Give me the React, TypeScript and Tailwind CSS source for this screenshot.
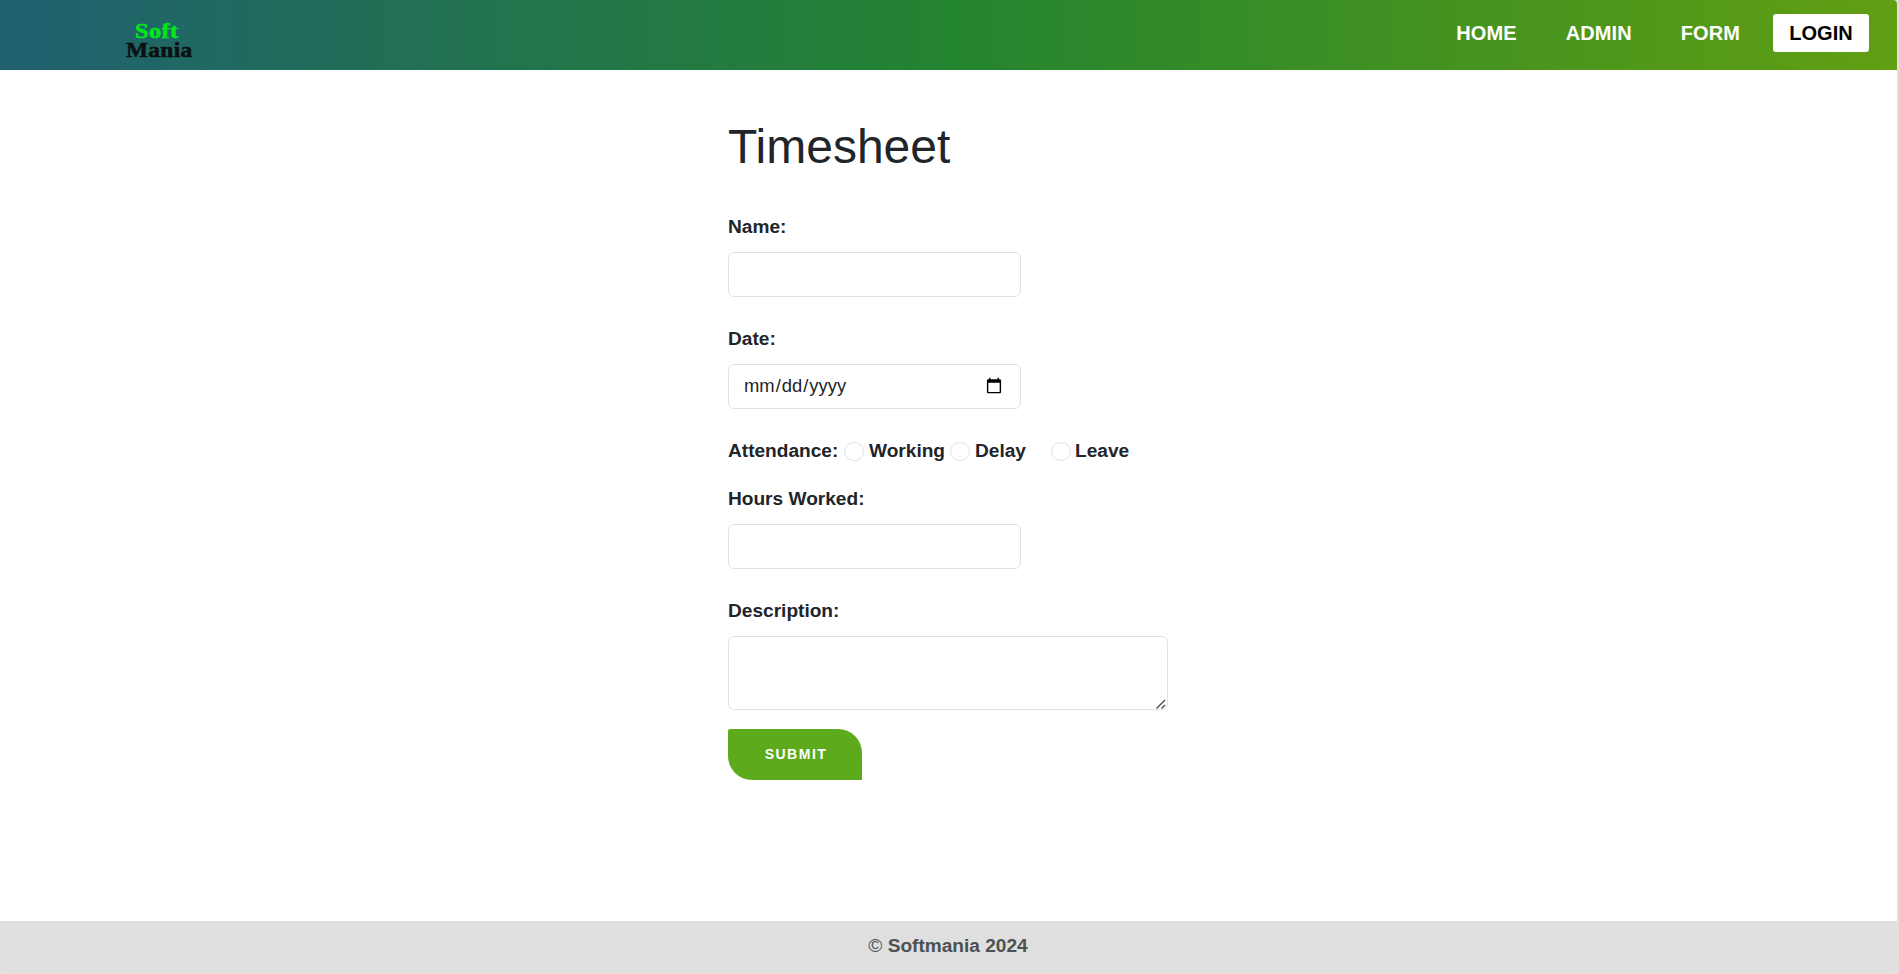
import type { ReactNode } from 'react';

const fieldClass =
  'block rounded-[6px] border border-[#dee2e6] bg-white text-[18.4px] text-[#212529] outline-none';

function Logo() {
  return (
    <svg width="80" height="50" viewBox="0 0 80 50" className="shrink-0" fontFamily="Liberation Serif, serif" fontWeight="700" fontSize="20" letterSpacing="0.3">
      <text x="15" y="22.5" textLength="43.5" lengthAdjust="spacingAndGlyphs" fill="#00e61b" stroke="#00e61b" strokeWidth="0.5">Soft</text>
      <text x="6" y="41.5" textLength="66.5" lengthAdjust="spacingAndGlyphs" fill="#0b1010" stroke="#0b1010" strokeWidth="0.5">Mania</text>
    </svg>
  );
}

function Label({ children }: { children: ReactNode }) {
  return <label className="block h-[29px] text-[19.1px] leading-[28px] font-bold">{children}</label>;
}

function RadioDot() {
  return (
    <input
      type="radio"
      name="attendance"
      className="block h-[19px] w-5 shrink-0 appearance-none rounded-full border border-[#dee2e6] bg-white"
    />
  );
}

export default function App() {
  return (
    <div className="h-[974px] overflow-hidden bg-[#e9dcdc] pr-[2px] pb-[2px] font-['Liberation_Sans',Arial,sans-serif] text-[#212529]">
      <div className="flex h-full flex-col overflow-hidden rounded-tr-[4px] rounded-b-[6px] bg-white">
        <header className="flex h-[70px] shrink-0 items-start justify-between bg-[linear-gradient(to_right,#206070_0%,#238430_50%,#619f12_100%)] pr-[28px] pl-[120px]">
          <div className="pt-[15px]">
            <Logo />
          </div>
          <nav className="flex items-center pt-[14px] text-[20px] leading-[38px] font-bold text-white">
            <a className="mr-[49px] tracking-[0.1px]">HOME</a>
            <a className="mr-[49px] tracking-[0.1px]">ADMIN</a>
            <a className="mr-[33px] tracking-[0.1px]">FORM</a>
            <a className="h-[38px] w-24 rounded-[3px] bg-white text-center text-black">LOGIN</a>
          </nav>
        </header>

        <main className="flex-1 pl-[728px]">
          <h1 className="mt-[48px] h-[58px] text-[48px] leading-[58px]">Timesheet</h1>
          <div className="mt-[37px]">
            <Label>Name:</Label>
            <input type="text" className={`${fieldClass} mt-[10px] h-[45px] w-[293px] px-[15px]`} />
          </div>
          <div className="mt-[28px]">
            <Label>Date:</Label>
            <input type="date" className={`${fieldClass} mt-[10px] h-[45px] w-[293px] pr-[15px] pb-px pl-[14px]`} />
          </div>
          <div className="mt-[28px] flex h-[29px] items-center text-[19.1px] leading-[28px] font-bold">
            <span className="mb-px w-[116px]">Attendance:</span>
            <RadioDot />
            <span className="mb-px ml-[5px] w-[81px]">Working</span>
            <RadioDot />
            <span className="mb-px ml-[5px] w-[76px]">Delay</span>
            <RadioDot />
            <span className="mb-px ml-[4px]">Leave</span>
          </div>
          <div className="mt-[19px]">
            <Label>Hours Worked:</Label>
            <input type="text" className={`${fieldClass} mt-[10px] h-[45px] w-[293px] px-[15px]`} />
          </div>
          <div className="mt-[28px]">
            <Label>Description:</Label>
            <div className="relative mt-[10px] w-[440px]">
              <textarea className={`${fieldClass} h-[74px] w-[440px] resize-none px-[15px]`} />
              <svg className="absolute right-[2px] bottom-[1px]" width="10" height="10" viewBox="0 0 10 10" stroke="#4a4a4a" strokeWidth="1.4">
                <path d="M0.5 9.5 9 1M5.5 9.5 9 6" fill="none" />
              </svg>
            </div>
          </div>
          <button className="mt-[19px] block h-[51px] w-[134px] rounded-tl-[2px] rounded-tr-[24px] rounded-bl-[24px] bg-[#5dab1c] pl-[2px] text-[14px] font-bold tracking-[1.5px] text-white">
            SUBMIT
          </button>
        </main>

        <footer className="h-[51px] shrink-0 bg-[#dfdfdf] pr-px text-center text-[19.1px] leading-[50px] font-bold text-[#4d5154]">
          <span className="font-normal">©</span> Softmania 2024
        </footer>
      </div>
    </div>
  );
}
